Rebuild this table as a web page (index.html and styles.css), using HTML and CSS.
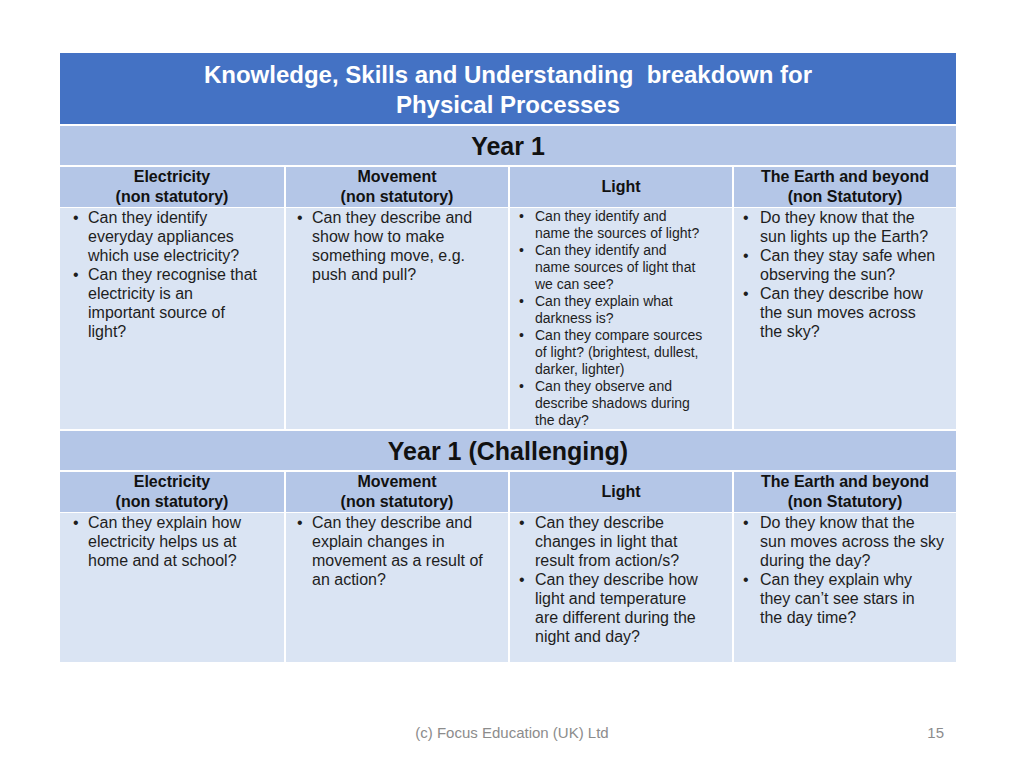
FILE: index.html
```html
<!DOCTYPE html>
<html>
<head>
<meta charset="utf-8">
<link rel="stylesheet" href="styles.css">
</head>
<body>
<div class="slide">
  <div class="grid">
    <div class="title">Knowledge, Skills and Understanding&nbsp; breakdown for<br>Physical Processes</div>

    <div class="band">Year 1</div>

    <div class="head">Electricity<br>(non statutory)</div>
    <div class="head">Movement<br>(non statutory)</div>
    <div class="head">Light</div>
    <div class="head">The Earth and beyond<br>(non Statutory)</div>

    <div class="cell c1">
      <ul>
        <li>Can they identify<br>everyday appliances<br>which use electricity?</li>
        <li>Can they recognise that<br>electricity is an<br>important source of<br>light?</li>
      </ul>
    </div>
    <div class="cell c2">
      <ul>
        <li>Can they describe and<br>show how to make<br>something move, e.g.<br>push and pull?</li>
      </ul>
    </div>
    <div class="cell c3 small">
      <ul>
        <li>Can they identify and<br>name the sources of light?</li>
        <li>Can they identify and<br>name sources of light that<br>we can see?</li>
        <li>Can they explain what<br>darkness is?</li>
        <li>Can they compare sources<br>of light? (brightest, dullest,<br>darker, lighter)</li>
        <li>Can they observe and<br>describe shadows during<br>the day?</li>
      </ul>
    </div>
    <div class="cell c4">
      <ul>
        <li>Do they know that the<br>sun lights up the Earth?</li>
        <li>Can they stay safe when<br>observing the sun?</li>
        <li>Can they describe how<br>the sun moves across<br>the sky?</li>
      </ul>
    </div>

    <div class="band">Year 1 (Challenging)</div>

    <div class="head">Electricity<br>(non statutory)</div>
    <div class="head">Movement<br>(non statutory)</div>
    <div class="head">Light</div>
    <div class="head">The Earth and beyond<br>(non Statutory)</div>

    <div class="cell c1 r2">
      <ul>
        <li>Can they explain how<br>electricity helps us at<br>home and at school?</li>
      </ul>
    </div>
    <div class="cell c2 r2">
      <ul>
        <li>Can they describe and<br>explain changes in<br>movement as a result of<br>an action?</li>
      </ul>
    </div>
    <div class="cell c3 r2">
      <ul>
        <li>Can they describe<br>changes in light that<br>result from action/s?</li>
        <li>Can they describe how<br>light and temperature<br>are different during the<br>night and day?</li>
      </ul>
    </div>
    <div class="cell c4 r2">
      <ul>
        <li>Do they know that the<br>sun moves across the sky<br>during the day?</li>
        <li>Can they explain why<br>they can’t see stars in<br>the day time?</li>
      </ul>
    </div>
  </div>

  <div class="footer">
    <span class="copy">(c) Focus Education (UK) Ltd</span>
    <span class="page">15</span>
  </div>
</div>
</body>
</html>
```

FILE: styles.css
```css
html, body {
  margin: 0;
  padding: 0;
  background: #ffffff;
}

.slide {
  width: 1024px;
  height: 768px;
  position: relative;
  font-family: "Liberation Sans", Arial, sans-serif;
  color: #1e1e1e;
  overflow: hidden;
}

.grid {
  margin: 53px 0 0 60px;
  width: 896px;
  display: grid;
  grid-template-columns: 224px 222px 222px 222px;
  grid-template-rows: 71px 39px 40px 220px 39px 40px 148px;
  column-gap: 2px;
  row-gap: 2px;
  background: #ffffff;
}

.title {
  grid-column: 1 / -1;
  background: #4472c4;
  color: #ffffff;
  font-weight: bold;
  font-size: 24px;
  line-height: 30px;
  text-align: center;
  display: flex;
  align-items: center;
  justify-content: center;
  padding-top: 3px;
  box-sizing: border-box;
}

.band {
  grid-column: 1 / -1;
  background: #b4c6e7;
  color: #111111;
  font-weight: bold;
  font-size: 25px;
  display: flex;
  align-items: center;
  justify-content: center;
  padding-top: 2px;
  box-sizing: border-box;
}

.head {
  background: #b4c6e7;
  color: #111111;
  font-weight: bold;
  font-size: 16px;
  line-height: 20px;
  text-align: center;
  display: flex;
  align-items: center;
  justify-content: center;
  white-space: nowrap;
}

.cell {
  background: #dae4f3;
  font-size: 16px;
  line-height: 19px;
  white-space: nowrap;
  margin-top: -1px;
}

.cell.small {
  font-size: 14px;
  line-height: 17px;
}

.cell ul {
  list-style: none;
  margin: 0;
  padding: 0;
}

.cell li {
  padding-left: 28px;
  text-indent: -15px;
}

.cell li::before {
  content: "•";
  display: inline-block;
  width: 15px;
  text-indent: 0;
}

.c1 li { padding-left: 28px; }
.c2 li { padding-left: 26px; }
.c3 li { padding-left: 25px; text-indent: -16px; }
.c3 li::before { width: 16px; }
.c4 li { padding-left: 26px; text-indent: -17px; }
.c4 li::before { width: 17px; }

.footer {
  position: absolute;
  left: 0;
  right: 0;
  top: 724px;
  height: 18px;
  font-size: 15px;
  color: #8c8c8c;
}

.copy {
  display: block;
  text-align: center;
  line-height: 18px;
}

.page {
  position: absolute;
  right: 80px;
  top: 0;
  line-height: 18px;
}
```
